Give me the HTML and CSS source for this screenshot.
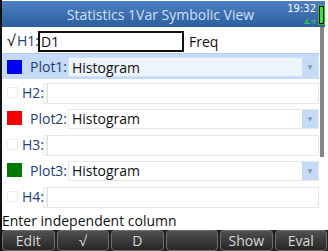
FILE: index.html
```html
<!DOCTYPE html>
<html lang="en">
<head>
    <meta charset="UTF-8">
    <title>Statistics 1Var Symbolic View</title>
    <link rel="stylesheet" href="styles.css">
</head>
<body>
    <div class="screen">
        <div class="titlebar">
            <span></span>
            <span class="title">Statistics 1Var Symbolic View</span>
            <div class="status">
                <div class="clock">
                    <span class="time">19:32</span>
                    <span class="angle">∡π</span>
                </div>
                <svg class="battery" width="7" height="20" viewBox="0 0 7 20">
                    <rect x="0.5" y="0.5" width="6" height="19" fill="#000" stroke="#29c229"/>
                    <rect x="2" y="2" width="3" height="16" fill="#3fe03f"/>
                </svg>
            </div>
        </div>

        <div class="body">
            <div class="rows">
                <div class="row hrow">
                    <span class="check">√</span>
                    <span class="label h1">H1:</span>
                    <span class="field focused">D1</span>
                    <span class="field plain">Freq</span>
                </div>
                <div class="row prow selected">
                    <span class="swatch blue"></span>
                    <span class="label">Plot1:</span>
                    <span class="select">Histogram<span class="arrow">▼</span></span>
                </div>
                <div class="row hrow">
                    <span class="box"></span>
                    <span class="label">H2:</span>
                    <span class="field"></span>
                    <span class="field"></span>
                </div>
                <div class="row prow">
                    <span class="swatch red"></span>
                    <span class="label">Plot2:</span>
                    <span class="select">Histogram<span class="arrow">▼</span></span>
                </div>
                <div class="row hrow">
                    <span class="box"></span>
                    <span class="label">H3:</span>
                    <span class="field"></span>
                    <span class="field"></span>
                </div>
                <div class="row prow">
                    <span class="swatch green"></span>
                    <span class="label">Plot3:</span>
                    <span class="select">Histogram<span class="arrow">▼</span></span>
                </div>
                <div class="row hrow">
                    <span class="box"></span>
                    <span class="label">H4:</span>
                    <span class="field"></span>
                    <span class="field"></span>
                </div>
            </div>
            <div class="scrollbar">
                <div class="thumb"></div>
            </div>
        </div>

        <div class="help">Enter independent column</div>

        <div class="menu">
            <span class="key">Edit</span>
            <span class="key">√</span>
            <span class="key">D</span>
            <span class="key"></span>
            <span class="key">Show</span>
            <span class="key">Eval</span>
        </div>
    </div>
</body>
</html>
```

FILE: styles.css
```css
body {
    margin: 0;
    background: #fff;
    font-family: "Open Sans", "DejaVu Sans", sans-serif;
}

.screen {
    width: 328px;
    height: 251px;
    box-sizing: border-box;
    border-left: 2px solid #111;
    padding-top: 1px;
    display: flex;
    flex-direction: column;
    overflow: hidden;
}

/* Title bar */
.titlebar {
    height: 26px;
    margin-right: 3px;
    display: grid;
    grid-template-columns: 1fr auto 1fr;
    align-items: center;
    background: linear-gradient(#4d7fc2, #2c5e9f);
}

.title {
    color: #cfe0f6;
    font-size: 14px;
    padding-right: 6px;
}

.status {
    display: flex;
    justify-content: flex-end;
    align-items: flex-start;
    height: 100%;
    padding-top: 2px;
    box-sizing: border-box;
}

.clock {
    display: flex;
    flex-direction: column;
    align-items: flex-end;
    margin-right: 2px;
}

.time {
    color: #f4f8ff;
    font-family: "DejaVu Sans", sans-serif;
    font-size: 10px;
    line-height: 11px;
}

.angle {
    color: #3ddc3d;
    font-size: 8px;
    line-height: 9px;
    margin-top: 2px;
}

.battery {
    margin-top: 2px;
}

/* Symbolic rows */
.body {
    display: flex;
    height: 182px;
}

.rows {
    flex: 1;
    display: flex;
    flex-direction: column;
}

.row {
    height: 26px;
    display: flex;
    align-items: center;
    font-size: 14px;
    box-sizing: border-box;
}

.label {
    color: #1d3d7c;
}

.hrow .check {
    margin-left: 5px;
    width: 10px;
    color: #111;
    font-size: 15px;
}

.hrow .box {
    width: 11px;
    height: 11px;
    margin-left: 5px;
    margin-right: 4px;
    border: 1px solid #eceeed;
    box-sizing: border-box;
}

.hrow .label {
    width: 21px;
}

.field {
    height: 21px;
    box-sizing: border-box;
    border: 1px solid #e3e9e6;
    margin-top: 2px;
    line-height: 19px;
    padding-left: 2px;
    color: #111;
}

.hrow .field:nth-of-type(1) {
    width: 138px;
    margin-right: 3px;
}

.hrow .field + .field {
    flex: 1;
    margin-right: 0;
}

.field.focused {
    width: 146px;
    border: 2px solid #111;
    line-height: 17px;
    margin-right: 2px;
    padding-left: 1px;
}

.field.plain {
    border-color: #fff;
}

.prow .swatch {
    width: 15px;
    height: 14px;
    margin-left: 5px;
    margin-right: 8px;
}

.swatch.blue { background: #0000f4; }
.swatch.red { background: #f50000; }
.swatch.green { background: #007a00; }

.prow .label {
    width: 38px;
}

.select {
    flex: 1;
    height: 20px;
    margin-top: 1px;
    display: flex;
    align-items: center;
    padding-left: 3px;
    border: 1px solid #e3e9e6;
    box-sizing: border-box;
    color: #111;
}

.arrow {
    margin-left: auto;
    width: 16px;
    height: 100%;
    display: flex;
    align-items: center;
    justify-content: center;
    background: #c6dbf7;
    color: #8a98a8;
    font-size: 6px;
}

.prow.selected {
    background: #c5daf5;
    border-top: 1px solid #b3cdf0;
}

.prow.selected .select {
    background: #eef4fb;
    border-color: #d3e3f7;
}

.scrollbar {
    width: 9px;
    display: flex;
    flex-direction: column;
}

.thumb {
    margin-left: 1px;
    width: 4px;
    height: 130px;
    background: #858585;
}

/* Help line and soft keys */
.help {
    height: 21px;
    box-sizing: border-box;
    padding-top: 3px;
    line-height: 18px;
    font-size: 14px;
    color: #111;
}

.menu {
    flex: 1;
    display: grid;
    grid-template-columns: repeat(6, 1fr);
    gap: 2px;
    background: #222;
    padding-right: 1px;
}

.key {
    display: flex;
    align-items: center;
    justify-content: center;
    border: 1px solid #6f6f6f;
    border-radius: 4px;
    background: linear-gradient(#505050, #262626);
    color: #d8d8d8;
    font-size: 14px;
}
```
